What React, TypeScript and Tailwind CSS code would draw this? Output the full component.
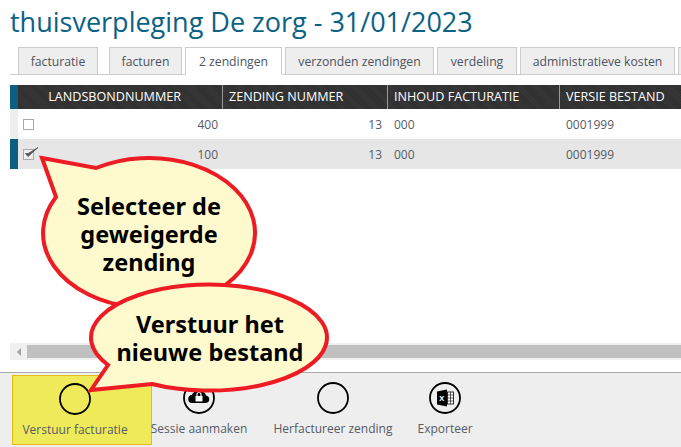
const tabs = [
  { label: "facturatie", width: "w-[80px]", gap: "mr-[11px]" },
  { label: "facturen", width: "w-[73px]", gap: "mr-[3px]" },
  { label: "2 zendingen", width: "w-[97px]", gap: "mr-[3px]", active: true },
  { label: "verzonden zendingen", width: "w-[149px]", gap: "mr-[3px]" },
  { label: "verdeling", width: "w-[80px]", gap: "mr-[3px]" },
  { label: "administratieve kosten", width: "w-[155px]", gap: "mr-[3px]" },
  { label: "", width: "w-[40px]", gap: "" },
];

const rows = [
  { nummer: "400", zending: "13", inhoud: "000", versie: "0001999", selected: false },
  { nummer: "100", zending: "13", inhoud: "000", versie: "0001999", selected: true },
];

function CheckBox({ checked }: { checked: boolean }) {
  return (
    <svg width="18" height="18" viewBox="0 0 18 18" className="shrink-0">
      <rect x="1.5" y="4.5" width="10" height="10" fill={checked ? "#eeeeee" : "#ffffff"} stroke="#aaaaaa" />
      {checked && <path d="M3.5 8.5 L6 11.5 L16 2.5 L6.2 8.5 Z" fill="#555555" stroke="#555555" strokeWidth="0.8" />}
    </svg>
  );
}

function ActionIcon({ children }: { children?: React.ReactNode }) {
  return (
    <svg width="32" height="32" viewBox="0 0 32 32">
      <circle cx="16" cy="16" r="15" fill="none" stroke="#000000" strokeWidth="1.8" />
      {children}
    </svg>
  );
}

function Action({ label, className, children }: { label: string; className: string; children?: React.ReactNode }) {
  return (
    <div className={`${className} h-[70px] shrink-0 flex flex-col items-center pt-[7px]`}>
      <ActionIcon>{children}</ActionIcon>
      <span className="mt-[7px] text-[12px] leading-[16px] text-[#555b66] whitespace-nowrap">{label}</span>
    </div>
  );
}

export default function App() {
  return (
    <div className="relative w-[681px] h-[447px] overflow-hidden bg-white flex flex-col font-['Open_Sans',sans-serif]">
      <h1 className="h-[47px] pl-[10px] pt-[4px] text-[27px] leading-[36px] text-[#0b6285] whitespace-nowrap">
        thuisverpleging De zorg - 31/01/2023
      </h1>

      <div className="ml-[10px] h-[28px] pl-[8px] flex items-start border-b border-[#cccccc]">
        {tabs.map((tab) => (
          <div
            key={tab.width + tab.label}
            className={`${tab.width} ${tab.gap} shrink-0 border border-[#cccccc] flex items-center justify-center pt-[2px] text-[12.2px] text-[#4d5360] whitespace-nowrap ${
              tab.active ? "h-[28px] bg-white border-b-white" : "h-[27px] bg-[#eeeeee] border-b-0"
            }`}
          >
            {tab.label}
          </div>
        ))}
      </div>

      <div className="ml-[10px] mt-[10px] flex h-[24px] bg-[repeating-linear-gradient(45deg,#373737_0px,#373737_1px,#2f2f2f_1px,#2f2f2f_2px)] text-[12.6px] text-white">
        <div className="w-[8px] bg-[#0b5f7f]" />
        <div className="w-[205px] flex items-center justify-end pr-[41px] border-r border-[#999999]">LANDSBONDNUMMER</div>
        <div className="w-[165px] flex items-center pl-[6px] border-r border-[#999999]">ZENDING NUMMER</div>
        <div className="w-[172px] flex items-center pl-[6px] border-r border-[#999999]">INHOUD FACTURATIE</div>
        <div className="flex-1 flex items-center pl-[6px]">VERSIE BESTAND</div>
      </div>

      {rows.map((row) => (
        <div key={row.nummer} className={`ml-[10px] flex h-[30px] text-[12px] text-[#555b66] ${row.selected ? "bg-[#e6e6e6]" : "bg-white"}`}>
          <div className={`w-[8px] ${row.selected ? "bg-[#0b5f7f]" : "bg-[#eeeeee]"}`} />
          <div className="w-[205px] flex items-center justify-between pl-[4px] pr-[5px]">
            <CheckBox checked={row.selected} />
            <span className="pt-[2px]">{row.nummer}</span>
          </div>
          <div className="w-[165px] flex items-center justify-end pr-[6px] pt-[2px]">{row.zending}</div>
          <div className="w-[172px] flex items-center pl-[6px] pt-[2px]">{row.inhoud}</div>
          <div className="flex-1 flex items-center pl-[6px] pt-[2px]">{row.versie}</div>
        </div>
      ))}

      <div className="flex-1" />

      <div className="ml-[10px] h-[17px] bg-[#f0f0f0] flex items-center">
        <div className="w-[17px] flex justify-center">
          <div className="w-0 h-0 border-y-[4px] border-y-transparent border-r-[4px] border-r-[#a0a0a0]" />
        </div>
        <div className="flex-1 h-[13px] bg-[#c0c0c0]" />
      </div>

      <div className="mt-[12px] h-[75px] border-t border-[#aaaaaa] bg-[#eeeeee] pl-[12px] pt-[2px] flex">
        <Action label="Verstuur facturatie" className="w-[140px] pr-[14px] bg-[#eeea5a] border border-[#e8bb12]" />
        <Action label="Sessie aanmaken" className="w-[94px]">
          <path d="M9.5 21 a4 4 0 0 1 -0.5 -8 a5 5 0 0 1 6 -3.5 h2 a5.5 5.5 0 0 1 6 4 a3.8 3.8 0 0 1 0 7.5 Z" fill="#000000" />
          <rect x="12.5" y="14" width="7" height="5.5" fill="#ffffff" />
          <path d="M14 14 v-1.5 a2 2 0 0 1 4 0 V14" fill="none" stroke="#ffffff" strokeWidth="1.2" />
        </Action>
        <Action label="Herfactureer zending" className="ml-[27px] w-[120px]" />
        <Action label="Exporteer" className="ml-[25px] w-[54px]">
          <path d="M8 9.5 L18 7.5 V24.5 L8 22.5 Z" fill="#000000" />
          <text x="10.3" y="19" fontSize="7.5" fontWeight="700" fill="#ffffff">X</text>
          <rect x="18.5" y="10" width="6" height="12" fill="#ffffff" stroke="#000000" strokeWidth="0.8" />
          <path d="M18.5 13 H24.5 M18.5 16 H24.5 M18.5 19 H24.5 M21.5 10 V22" stroke="#000000" strokeWidth="0.6" />
        </Action>
      </div>

      {/* callouts over the page */}
      <svg width="681" height="447" viewBox="0 0 681 447" className="absolute inset-0">
        <path
          d="M42 158 L96 168 A106 75 0 1 1 56 197 Z"
          fill="#fffacd"
          stroke="#ed1c24"
          strokeWidth="4"
        />
        <path
          d="M91 390 L108 365 A118 53 0 1 1 152 384 Z"
          fill="#fffacd"
          stroke="#ed1c24"
          strokeWidth="4"
        />
      </svg>

      <div className="absolute left-[49px] top-[192px] w-[200px] text-center text-[23.5px] leading-[28px] font-bold text-black font-['Noto_Sans',sans-serif]">
        Selecteer de
        <br />
        geweigerde
        <br />
        zending
      </div>
      <div className="absolute left-[110px] top-[311px] w-[200px] text-center text-[23.5px] leading-[27.5px] font-bold text-black font-['Noto_Sans',sans-serif]">
        Verstuur het
        <br />
        nieuwe bestand
      </div>
    </div>
  );
}
